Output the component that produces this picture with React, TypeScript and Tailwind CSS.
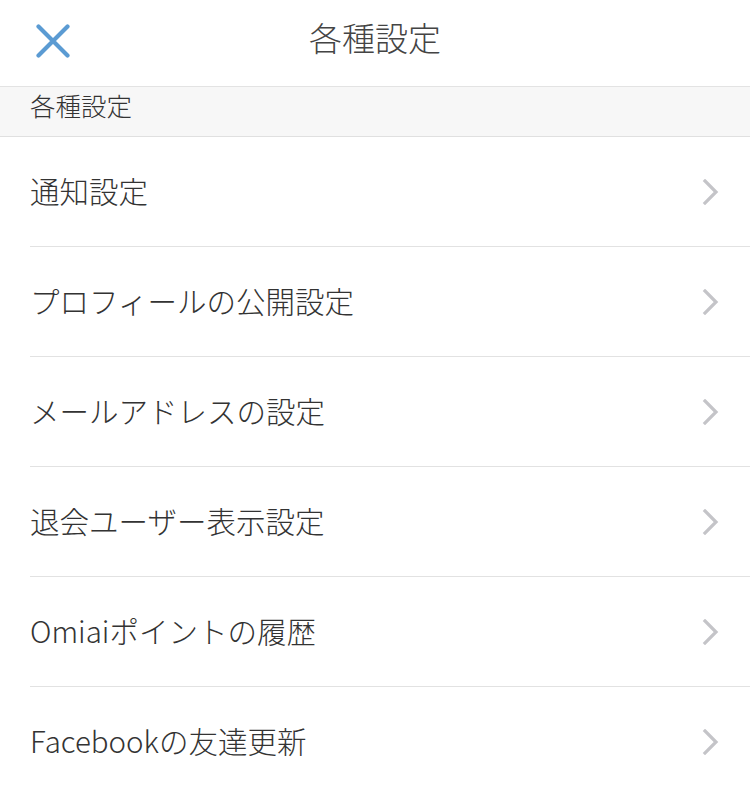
const items = [
  '通知設定',
  'プロフィールの公開設定',
  'メールアドレスの設定',
  '退会ユーザー表示設定',
  'Omiaiポイントの履歴',
  'Facebookの友達更新',
];

function CloseIcon() {
  return (
    <svg width="34" height="34" viewBox="0 0 34 34" fill="none" aria-hidden="true">
      <path d="M2.5 2.5L31.5 31.5M31.5 2.5L2.5 31.5" stroke="#5b9bd3" strokeWidth="4.2" strokeLinecap="round" />
    </svg>
  );
}

function Chevron() {
  return (
    <svg width="18" height="26" viewBox="0 0 18 26" fill="none" aria-hidden="true">
      <path d="M3 2L14 13L3 24" stroke="#c4c4c8" strokeWidth="3.2" strokeLinecap="square" />
    </svg>
  );
}

export default function App() {
  return (
    <div
      className="w-[750px] h-[797px] overflow-hidden bg-white text-[#333333] font-light"
      style={{ fontFamily: '"Noto Sans CJK JP", "Noto Sans", sans-serif' }}
    >
      <header className="relative h-[87px] flex items-center justify-center border-b border-[#e3e3e3]">
        <button className="absolute left-[36px] top-[24px] p-0">
          <CloseIcon />
        </button>
        <h1 className="text-[33px] leading-none text-[#444444] -mt-[11px]">各種設定</h1>
      </header>

      <div className="h-[50px] bg-[#f7f7f7] border-b border-[#e0e0e0] pl-[30px]">
        <span className="text-[25.5px] leading-[36px] text-[#333333]">各種設定</span>
      </div>

      <ul>
        {items.map((label, i) => (
          <li key={label} className="pl-[30px]">
            <div
              className={
                'h-[110px] flex items-center justify-between pr-[30px] ' +
                (i < items.length - 1 ? 'border-b border-[#e2e2e2]' : '')
              }
            >
              <span className="text-[29.5px] leading-none text-[#333333] -mt-[2px]">{label}</span>
              <Chevron />
            </div>
          </li>
        ))}
      </ul>
    </div>
  );
}
